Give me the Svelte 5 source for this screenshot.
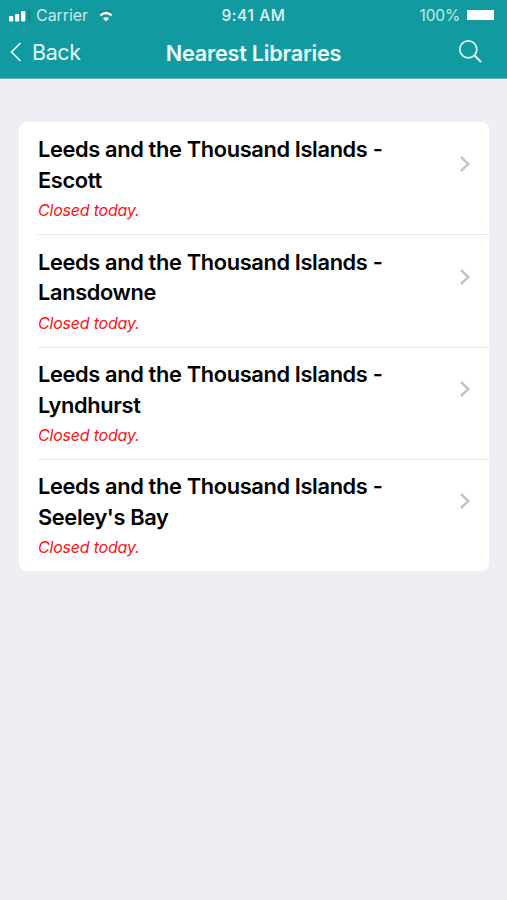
<script lang="ts">
  type Library = {
    id: number;
    name: string;
    status: string;
  };

  const libraries: Library[] = [
    { id: 1, name: 'Leeds and the Thousand Islands - Escott', status: 'Closed today.' },
    { id: 2, name: 'Leeds and the Thousand Islands - Lansdowne', status: 'Closed today.' },
    { id: 3, name: 'Leeds and the Thousand Islands - Lyndhurst', status: 'Closed today.' },
    { id: 4, name: "Leeds and the Thousand Islands - Seeley's Bay", status: 'Closed today.' },
  ];
</script>

<div class="screen">
  <header>
    <div class="status-bar">
      <div class="carrier">
        <svg class="signal" width="26" height="14" viewBox="0 0 26 14">
          <rect x="0" y="8" width="4.2" height="5.4" rx="1" fill="#fff" />
          <rect x="6" y="6" width="4.2" height="7.4" rx="1" fill="#fff" />
          <rect x="12.1" y="3" width="4.2" height="10.4" rx="1" fill="#fff" />
          <rect x="18.4" y="1.4" width="3.6" height="12" rx="1" fill="#16878c" />
        </svg>
        <span class="carrier-name">Carrier</span>
        <svg class="wifi" width="16" height="12" viewBox="0 0 16 12">
          <path d="M1 3.2Q8 -2.6 15 3.2" fill="none" stroke="#16878c" stroke-width="1.8" />
          <path d="M2.4 5.4Q8 .8 13.6 5.4" fill="none" stroke="#fff" stroke-width="2.4" />
          <path d="M5 8.4Q8 6 11 8.4L8 11.2Z" fill="#fff" />
        </svg>
      </div>
      <span class="time">9:41 AM</span>
      <div class="power">
        <span class="percent">100%</span>
        <span class="battery"></span>
      </div>
    </div>
    <nav>
      <button class="back">
        <svg width="12" height="20" viewBox="0 0 12 20">
          <path d="M10.5 1L1.5 10L10.5 19" fill="none" stroke="currentColor" stroke-width="1.7" />
        </svg>
        <span>Back</span>
      </button>
      <h1>Nearest Libraries</h1>
      <button class="search" aria-label="Search">
        <svg width="24" height="24" viewBox="0 0 24 24">
          <circle cx="9.3" cy="9.4" r="8.5" fill="none" stroke="currentColor" stroke-width="1.6" />
          <path d="M15.5 15.6L22 22" stroke="currentColor" stroke-width="2.1" />
        </svg>
      </button>
    </nav>
  </header>

  <ul class="list">
    {#each libraries as library (library.id)}
      <li>
        <div class="info">
          <h2>{library.name}</h2>
          <p>{library.status}</p>
        </div>
        <svg class="chevron" width="12" height="18" viewBox="0 0 12 18">
          <path d="M2 2L9.3 9L2 16" fill="none" stroke="#c4c4c6" stroke-width="2.5" />
        </svg>
      </li>
    {/each}
  </ul>
</div>

<style>
  :global(body) {
    margin: 0;
    background: #efeef4;
  }
  .screen {
    min-height: 100vh;
    background: #efeef4;
    font-family: Inter, 'Liberation Sans', sans-serif;
    color: #000;
  }
  header {
    box-sizing: border-box;
    height: 80px;
    background: #119ba1;
    border-bottom: 1px solid #f8fcfd;
    box-shadow: inset 0 -1px #5fb9be;
    color: #fff;
  }
  .status-bar {
    display: grid;
    grid-template-columns: 1fr auto 1fr;
    align-items: center;
    height: 30px;
    padding: 0 13px 0 9px;
    font-size: 15.5px;
  }
  .carrier,
  .power {
    display: flex;
    align-items: center;
  }
  .carrier-name {
    margin: 0 10px 0 1px;
    color: #c8e8ea;
    font-size: 16px;
    letter-spacing: -0.05px;
  }
  .wifi {
    margin-top: 2px;
  }
  .time {
    margin-left: 4px;
    font-weight: 500;
    letter-spacing: 0.6px;
    color: #e2f5f6;
  }
  .power {
    justify-content: flex-end;
    gap: 7px;
  }
  .percent {
    color: #c8e8ea;
    letter-spacing: -0.15px;
  }
  .battery {
    width: 27px;
    height: 10px;
    border-radius: 1px;
    background: #fff;
    box-shadow: 0 0 0 1px #2a9197;
  }
  nav {
    display: grid;
    grid-template-columns: 1fr auto 1fr;
    align-items: center;
    height: 44px;
    padding: 0 10px;
  }
  button {
    display: flex;
    align-items: center;
    padding: 0;
    border: none;
    background: none;
    color: #e2f8f8;
    font-family: inherit;
    cursor: pointer;
  }
  .back {
    gap: 10px;
    font-size: 21.5px;
    letter-spacing: -0.4px;
  }
  .search {
    justify-self: end;
    margin-right: 14px;
  }
  h1 {
    margin: 1px 0 0;
    color: #eafafa;
    font-size: 21.7px;
    font-weight: 600;
    letter-spacing: -0.25px;
  }
  .list {
    margin: 42px 18px 0 19px;
    padding: 0;
    border-radius: 8px;
    background: #fff;
    list-style: none;
  }
  li {
    display: flex;
    justify-content: space-between;
    box-sizing: border-box;
    height: 112.3px;
    margin-left: 19px;
    padding: 12.3px 18px 0 0;
  }
  li + li {
    padding-top: 11.5px;
    border-top: 1px solid #e8e8eb;
  }
  .info {
    width: 370px;
  }
  h2 {
    margin: 0;
    font-size: 21.8px;
    font-weight: 600;
    letter-spacing: -0.35px;
    line-height: 30.6px;
  }
  p {
    margin: 4.6px 0 0;
    color: #fa1214;
    font-size: 16px;
    font-style: italic;
    letter-spacing: -0.2px;
    line-height: 20px;
  }
  .chevron {
    margin-top: 21px;
  }
</style>
